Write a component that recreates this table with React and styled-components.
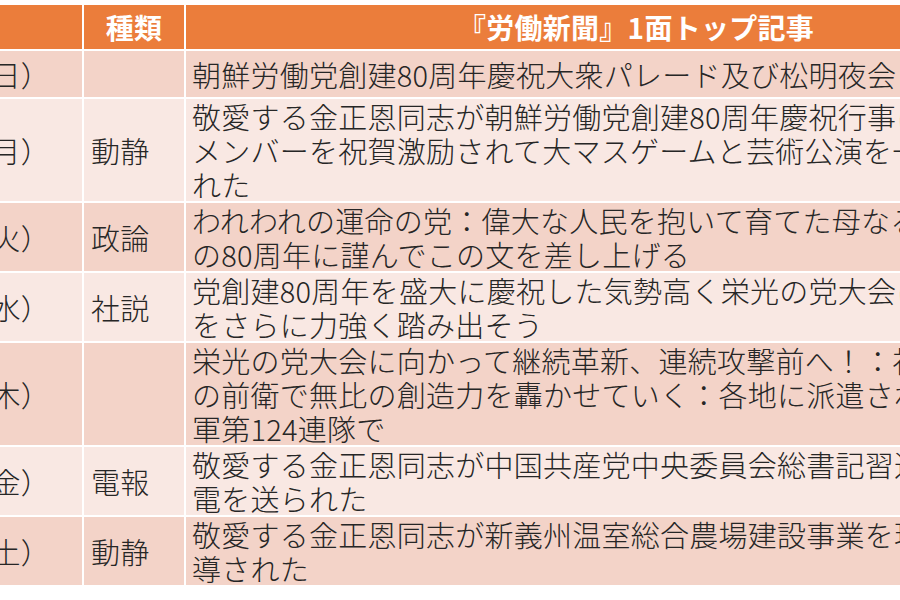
import styled, { createGlobalStyle } from "styled-components";

const articles = [
	{
		date: "10月12日（日）",
		kind: "",
		lines: ["朝鮮労働党創建80周年慶祝大衆パレード及び松明夜会"]
	},
	{
		date: "10月13日（月）",
		kind: "動静",
		lines: [
			"敬愛する金正恩同志が朝鮮労働党創建80周年慶祝行事に参加した",
			"メンバーを祝賀激励されて大マスゲームと芸術公演を一緒に観覧さ",
			"れた"
		]
	},
	{
		date: "10月14日（火）",
		kind: "政論",
		lines: [
			"われわれの運命の党：偉大な人民を抱いて育てた母なる党",
			"の80周年に謹んでこの文を差し上げる"
		]
	},
	{
		date: "10月15日（水）",
		kind: "社説",
		lines: [
			"党創建80周年を盛大に慶祝した気勢高く栄光の党大会に向かう道",
			"をさらに力強く踏み出そう"
		]
	},
	{
		date: "10月16日（木）",
		kind: "",
		lines: [
			"栄光の党大会に向かって継続革新、連続攻撃前へ！：社会主義建設",
			"の前衛で無比の創造力を轟かせていく：各地に派遣された人民",
			"軍第124連隊で"
		]
	},
	{
		date: "10月17日（金）",
		kind: "電報",
		lines: [
			"敬愛する金正恩同志が中国共産党中央委員会総書記習近平同志に祝",
			"電を送られた"
		]
	},
	{
		date: "10月18日（土）",
		kind: "動静",
		lines: [
			"敬愛する金正恩同志が新義州温室総合農場建設事業を現地指",
			"導された"
		]
	}
];

export default function App() {
	return (
		<>
			<GlobalStyle />
			<Page>
				<Table>
					<colgroup>
						<col style={{ width: 320 }} />
						<col style={{ width: 100 }} />
						<col style={{ width: 900 }} />
					</colgroup>
					<thead>
						<tr>
							<HeadCell />
							<HeadCell>種類</HeadCell>
							<HeadCell>『労働新聞』1面トップ記事</HeadCell>
						</tr>
					</thead>
					<tbody>
						{articles.map((a, i) => (
							<Row key={i} $light={i % 2 === 1}>
								<DateCell>{a.date}</DateCell>
								<KindCell>{a.kind}</KindCell>
								<TitleCell>
									{a.lines.map((line, j) => (
										<Line key={j}>{line}</Line>
									))}
								</TitleCell>
							</Row>
						))}
					</tbody>
				</Table>
			</Page>
		</>
	);
}

const GlobalStyle = createGlobalStyle`
	html, body {
		margin: 0;
		padding: 0;
		background: #ffffff;
		overflow: hidden;
	}
	body {
		font-family: "Noto Sans CJK JP", "Noto Sans", sans-serif;
	}
`;

const Page = styled.div`
	width: 900px;
	height: 600px;
	overflow: hidden;
	padding-top: 3px;
	box-sizing: border-box;
	background: #ffffff;
`;

const Table = styled.table`
	table-layout: fixed;
	border-collapse: separate;
	border-spacing: 2px;
	width: 1328px;
	margin-left: -240px;
	font-size: 29px;
	letter-spacing: 0.25px;
	line-height: 34px;
	font-weight: 300;
	color: #262626;
`;

const HeadCell = styled.th`
	height: 44px;
	padding: 0;
	background: #eb7d3b;
	color: #ffffff;
	font-weight: 700;
	font-size: 28px;
	text-align: center;
	vertical-align: middle;
`;

const Row = styled.tr`
	background: ${p => (p.$light ? "#f9e8e3" : "#f3d3c8")};
`;

const BodyCell = styled.td`
	height: 46px;
	padding: 0;
	vertical-align: middle;
	white-space: nowrap;
	overflow: hidden;
`;

const DateCell = styled(BodyCell)`
	text-align: right;
	padding-right: 32px;
`;

const KindCell = styled(BodyCell)`
	padding-left: 7px;
`;

const TitleCell = styled(BodyCell)`
	padding-left: 6px;
`;

const Line = styled.span`
	display: block;
`;
